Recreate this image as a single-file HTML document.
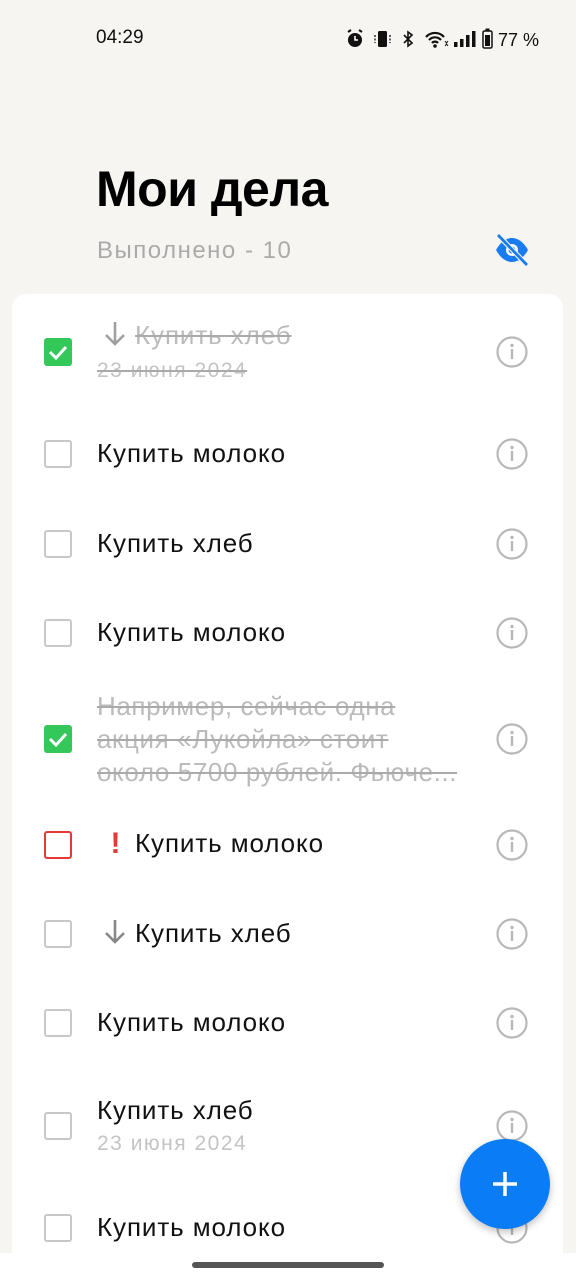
<!DOCTYPE html>
<html><head><meta charset="utf-8">
<style>
*{margin:0;padding:0;box-sizing:border-box}
body{width:576px;height:1280px;background:#f6f5f2;font-family:"Liberation Sans",sans-serif;position:relative;overflow:hidden}
.abs{position:absolute}
.card{position:absolute;left:12px;top:294px;width:551px;height:959px;background:#fff;border-radius:14px 14px 0 0}
.bottom{position:absolute;left:0;top:1253px;width:576px;height:27px;background:#fff}
.cb{position:absolute;left:44px;width:28px;height:28px;border:2.5px solid #c8c8c8;border-radius:3px}
.cb.done{background:#34c759;border:none;border-radius:3px}
.cb.red{border-color:#e53935}
.t{position:absolute;left:97px;font-size:26px;color:#111;white-space:nowrap;letter-spacing:0.9px}
.s{color:#bbb;text-decoration:line-through;text-decoration-color:#aaa;text-decoration-thickness:2px}
.d{position:absolute;left:97px;font-size:21px;color:#c4c4c4;white-space:nowrap;letter-spacing:1.5px}
.info{position:absolute;left:496px;width:32px;height:32px}
.ar{display:inline-block;vertical-align:-3px;width:28px;height:28px;margin-left:4px;margin-right:6px}
</style></head><body>
<div class="abs" style="left:96px;top:27px;font-size:19px;color:#111">04:29</div>
<svg class="abs" style="left:344px;top:27px" width="200" height="24" viewBox="0 0 200 24">
<circle cx="11" cy="13" r="7" fill="#111"/><path d="M4 5l3-2M18 5l-3-2" stroke="#111" stroke-width="2"/><path d="M11 9v4h3" stroke="#fff" stroke-width="1.6" fill="none"/>
<rect x="34" y="4" width="9" height="16" rx="1.5" fill="#111"/><path d="M31 8v8M46 8v8" stroke="#111" stroke-width="1.3" stroke-dasharray="2 1.5"/>
<path d="M60 8l8 8-4 3V5l4 3-8 8" stroke="#111" stroke-width="1.6" fill="none"/>
<path d="M82 10a12 12 0 0 1 18 0M85 13a8 8 0 0 1 12 0M88 16a4 4 0 0 1 6 0" stroke="#111" stroke-width="2.2" fill="none"/><circle cx="91" cy="19" r="1.8" fill="#111"/><path d="M101 14l1.5 2 1.5-2M101 19l1.5-2 1.5 2" stroke="#111" stroke-width="1" fill="none"/>
<rect x="110" y="15" width="3.5" height="5" fill="#111"/><rect x="116" y="12" width="3.5" height="8" fill="#111"/><rect x="122" y="8" width="3.5" height="12" fill="#111"/><rect x="128" y="4" width="3.5" height="16" fill="#111"/>
<rect x="139" y="4" width="9" height="17" rx="1.5" fill="none" stroke="#111" stroke-width="1.5"/><rect x="141" y="8" width="5" height="11" fill="#111"/><rect x="141.5" y="1.5" width="4" height="2" fill="#111"/>
<text x="154" y="19" font-family="Liberation Sans" font-size="18" fill="#111">77 %</text>
</svg>
<div class="abs" style="left:96px;top:160px;font-size:50px;font-weight:bold;color:#000;letter-spacing:-0.5px">Мои дела</div>
<div class="abs" style="left:97px;top:237px;font-size:24px;color:#aaa;letter-spacing:1.5px">Выполнено - 10</div>
<svg class="abs" style="left:493px;top:233px" width="38" height="34" viewBox="0 0 38 34">
<path d="M3 17C8 8 14 5 19 5s11 3 16 12c-5 9-11 12-16 12S8 26 3 17z" fill="#1a7cf2"/>
<circle cx="19" cy="17" r="6" fill="#fff"/><circle cx="19" cy="17" r="3.5" fill="#1a7cf2"/>
<path d="M5 2l29 30" stroke="#f6f5f2" stroke-width="5"/><path d="M5 2l29 30" stroke="#1a7cf2" stroke-width="2.8"/>
</svg>
<div class="card"></div>
<div class="bottom"></div>

<svg width="0" height="0" style="position:absolute"><defs><g id="i"><circle cx="16" cy="16" r="14.5" fill="none" stroke="#b8b8b8" stroke-width="2.2"/><circle cx="16" cy="9.5" r="1.7" fill="#b8b8b8"/><rect x="14.8" y="13" width="2.4" height="10" fill="#b8b8b8"/></g>
<g id="ck"><path d="M6 14l6 6 10-11" stroke="#fff" stroke-width="3" fill="none"/></g>
<g id="arr"><path d="M14 3v22M5 16l9 9 9-9" stroke="currentColor" stroke-width="2.6" fill="none"/></g></defs></svg>

<svg class="cb done" style="top:338px" viewBox="0 0 28 28"><use href="#ck"/></svg>
<div class="t s" style="top:319px;color:#bbb"><svg class="ar" style="color:#a0a0a0;margin-left:4px"><use href="#arr"/></svg>Купить хлеб</div>
<div class="d s" style="top:359px">23 июня 2024</div>
<svg class="info" style="top:336px"><use href="#i"/></svg>

<div class="cb" style="top:440px"></div><div class="t" style="top:438px">Купить молоко</div><svg class="info" style="top:438px"><use href="#i"/></svg>
<div class="cb" style="top:530px"></div><div class="t" style="top:528px">Купить хлеб</div><svg class="info" style="top:528px"><use href="#i"/></svg>
<div class="cb" style="top:619px"></div><div class="t" style="top:617px">Купить молоко</div><svg class="info" style="top:617px"><use href="#i"/></svg>

<svg class="cb done" style="top:725px" viewBox="0 0 28 28"><use href="#ck"/></svg>
<div class="t s" style="top:690px;line-height:33px;color:#bbb;letter-spacing:0.6px">Например, сейчас одна<br>акция «Лукойла» стоит<br>около 5700 рублей. Фьюче...</div>
<svg class="info" style="top:723px"><use href="#i"/></svg>

<div class="cb red" style="top:831px"></div><div class="t" style="top:828px"><span style="color:#e53935;font-weight:bold;font-size:30px;line-height:25px;display:inline-block;width:38px;text-align:center;vertical-align:-1px">!</span>Купить молоко</div><svg class="info" style="top:829px"><use href="#i"/></svg>
<div class="cb" style="top:920px"></div><div class="t" style="top:917px"><svg class="ar" style="color:#888"><use href="#arr"/></svg>Купить хлеб</div><svg class="info" style="top:918px"><use href="#i"/></svg>
<div class="cb" style="top:1009px"></div><div class="t" style="top:1007px">Купить молоко</div><svg class="info" style="top:1007px"><use href="#i"/></svg>
<div class="cb" style="top:1112px"></div><div class="t" style="top:1095px">Купить хлеб</div><div class="d" style="top:1132px">23 июня 2024</div><svg class="info" style="top:1110px"><use href="#i"/></svg>
<div class="cb" style="top:1214px"></div><div class="t" style="top:1212px">Купить молоко</div><svg class="info" style="top:1212px"><use href="#i"/></svg>

<div class="abs" style="left:460px;top:1139px;width:90px;height:90px;border-radius:50%;background:#0a7cf5;box-shadow:0 3px 8px rgba(0,0,0,.25)">
<svg width="90" height="90"><path d="M45 33v24M33 45h24" stroke="#fff" stroke-width="3.5"/></svg></div>
<div class="abs" style="left:192px;top:1262px;width:192px;height:6px;border-radius:3px;background:#555"></div>
</body></html>
